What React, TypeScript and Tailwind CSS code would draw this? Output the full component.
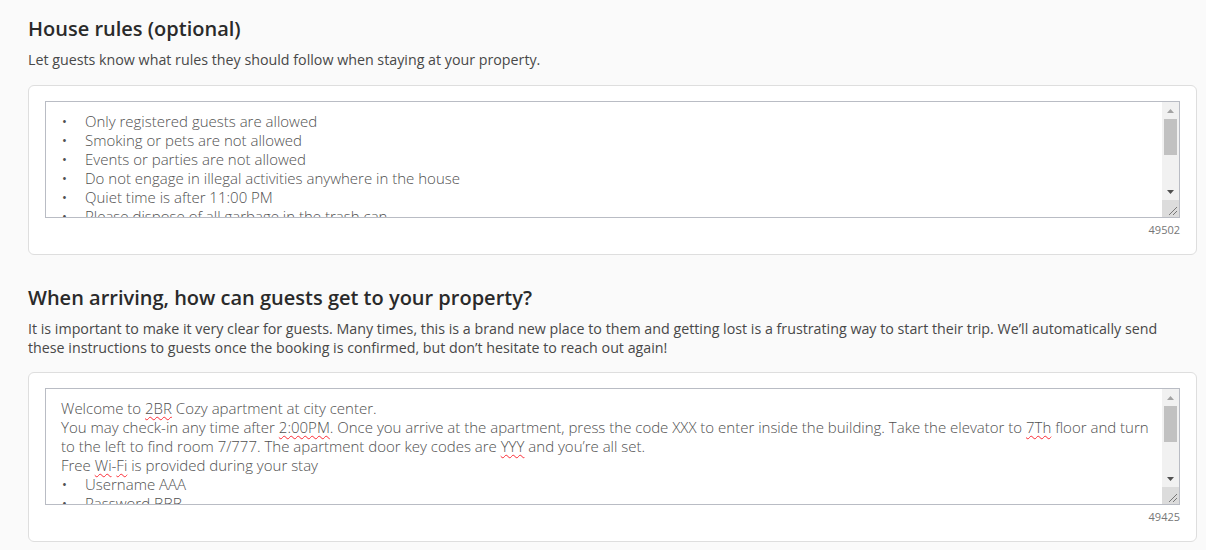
import React from "react";

const font = { fontFamily: '"Open Sans", "Liberation Sans", sans-serif' };

function Squiggle({ children }: { children: React.ReactNode }) {
  return (
    <span className="underline decoration-wavy decoration-red-500 decoration-[1px] underline-offset-[2px]">
      {children}
    </span>
  );
}

function Bullet({ children }: { children: React.ReactNode }) {
  return (
    <div className="flex">
      <span className="w-[24px] shrink-0 pl-[1px] text-[13px] font-normal">•</span>
      <span>{children}</span>
    </div>
  );
}

function FakeScrollbar() {
  return (
    <div className="flex w-[17px] shrink-0 flex-col bg-[#f1f1f1]">
      <div className="flex h-[17px] items-center justify-center">
        <svg width="7" height="4" viewBox="0 0 7 4"><path d="M0 4 L3.5 0 L7 4 Z" fill="#a3a3a3" /></svg>
      </div>
      <div className="mx-[2px] h-[36px] bg-[#c1c1c1]" />
      <div className="flex-1" />
      <div className="flex h-[17px] items-center justify-center">
        <svg width="7" height="4" viewBox="0 0 7 4"><path d="M0 0 L7 0 L3.5 4 Z" fill="#505050" /></svg>
      </div>
      <div className="relative h-[17px] bg-[#dcdcdc]">
        <svg className="absolute bottom-[2px] right-[2px]" width="9" height="9" viewBox="0 0 9 9">
          <path d="M9 1 L1 9 M9 5 L5 9" stroke="#777" strokeWidth="1" />
        </svg>
      </div>
    </div>
  );
}

function TextBox({ children, count }: { children: React.ReactNode; count: string }) {
  return (
    <div className="rounded-md border border-[#dedede] bg-white px-4 pt-[15px] pb-[17px]">
      <div className="flex h-[117px] border border-[#b9bcc4]">
        <div className="flex-1 overflow-hidden pl-[15px] pr-[8px] pt-[10px] text-[15px] font-light leading-[19px] text-[#505050]">
          {children}
        </div>
        <FakeScrollbar />
      </div>
      <div className="mt-[5px] text-right text-[11px] leading-[14px] text-[#777]">{count}</div>
    </div>
  );
}

export default function App() {
  return (
    <div className="min-h-[550px] bg-[#fafafa] pl-[28px] pr-[9px] pt-[15px]" style={font}>
      <h2 className="text-[20px] font-semibold leading-[28px] text-[#2a2a2a]">House rules (optional)</h2>
      <p className="mt-[7px] text-[14.25px] leading-[19px] text-[#484848]">
        Let guests know what rules they should follow when staying at your property.
      </p>
      <div className="mt-[16px]">
        <TextBox count="49502">
          <Bullet>Only registered guests are allowed</Bullet>
          <Bullet>Smoking or pets are not allowed</Bullet>
          <Bullet>Events or parties are not allowed</Bullet>
          <Bullet>Do not engage in illegal activities anywhere in the house</Bullet>
          <Bullet>Quiet time is after 11:00 PM</Bullet>
          <Bullet>Please dispose of all garbage in the trash can</Bullet>
          <Bullet>Do not move the furniture</Bullet>
        </TextBox>
      </div>

      <h2 className="mt-[29px] text-[20px] font-semibold leading-[28px] text-[#2a2a2a]">
        When arriving, how can guests get to your property?
      </h2>
      <p className="mt-[7px] pr-[30px] text-[14.25px] leading-[19px] text-[#484848]">
        It is important to make it very clear for guests. Many times, this is a brand new place to them and getting lost is a frustrating way to start their trip. We’ll automatically send these instructions to guests once the booking is confirmed, but don’t hesitate to reach out again!
      </p>
      <div className="mt-[15px]">
        <TextBox count="49425">
          <div>
            Welcome to <Squiggle>2BR</Squiggle> Cozy apartment at city center.
          </div>
          <div>
            You may check-in any time after <Squiggle>2:00PM</Squiggle>. Once you arrive at the apartment, press the code XXX to enter inside the building. Take the elevator to <Squiggle>7Th</Squiggle> floor and turn to the left to find room 7/777. The apartment door key codes are <Squiggle>YYY</Squiggle> and you’re all set.
          </div>
          <div>
            Free <Squiggle>Wi</Squiggle>-<Squiggle>Fi</Squiggle> is provided during your stay
          </div>
          <Bullet>Username AAA</Bullet>
          <Bullet>Password BBB</Bullet>
        </TextBox>
      </div>
    </div>
  );
}
